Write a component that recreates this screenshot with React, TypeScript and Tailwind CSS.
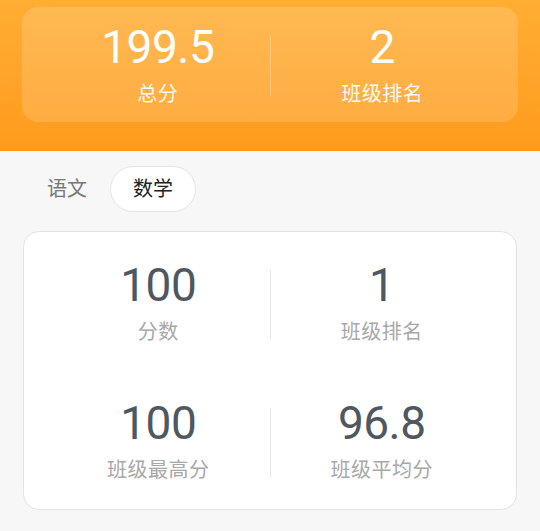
import { useState } from "react";

const FONT = "font-['Roboto','Noto_Sans_CJK_SC',sans-serif]";

const totals = [
  { value: "199.5", label: "总分" },
  { value: "2", label: "班级排名" },
];

const rows = [
  [
    { value: "100", label: "分数" },
    { value: "1", label: "班级排名" },
  ],
  [
    { value: "100", label: "班级最高分" },
    { value: "96.8", label: "班级平均分" },
  ],
];

function Stat({ value, label, light }: { value: string; label: string; light?: boolean }) {
  return (
    <div className="flex-1 flex flex-col items-center">
      <div className={`text-[46px] leading-none tracking-[-0.5px] ${light ? "text-white" : "text-[#4f5761]"}`}>{value}</div>
      <div className={`mt-[10px] text-[20px] leading-[28px] tracking-[0.5px] ${light ? "text-white/95" : "text-[#a8a8a8]"}`}>{label}</div>
    </div>
  );
}

export default function App() {
  const [tab, setTab] = useState("数学");

  return (
    <div className={`min-h-screen bg-[#f7f7f7] ${FONT}`}>
      <div className="h-[151px] bg-gradient-to-b from-[#ffae33] to-[#ff9b1c] pt-[7px] px-[22px]">
        <div className="rounded-[16px] bg-white/15 px-[24px] pt-[17px] pb-[14px] flex items-center">
          <Stat {...totals[0]} light />
          <div className="w-px h-[60px] bg-white/30" />
          <Stat {...totals[1]} light />
        </div>
      </div>

      <div className="flex px-[24px] mt-[15px]">
        {["语文", "数学"].map((t) => (
          <button
            key={t}
            onClick={() => setTab(t)}
            className={`h-[46px] px-[22px] rounded-full text-[20px] leading-none border ${
              tab === t ? "bg-white border-[#e4e4e4] text-[#222]" : "border-transparent text-[#777]"
            }`}
          >
            {t}
          </button>
        ))}
      </div>

      <div className="mx-[23px] mt-[19px] bg-white rounded-[16px] border border-[#e3e3e3] px-[23px] pt-[30px] pb-[25px]">
        {rows.map((row, i) => (
          <div key={i} className={`flex items-center ${i > 0 ? "mt-[54px]" : ""}`}>
            <Stat {...row[0]} />
            <div className="w-px h-[69px] bg-[#e6e6e6]" />
            <Stat {...row[1]} />
          </div>
        ))}
      </div>
    </div>
  );
}
